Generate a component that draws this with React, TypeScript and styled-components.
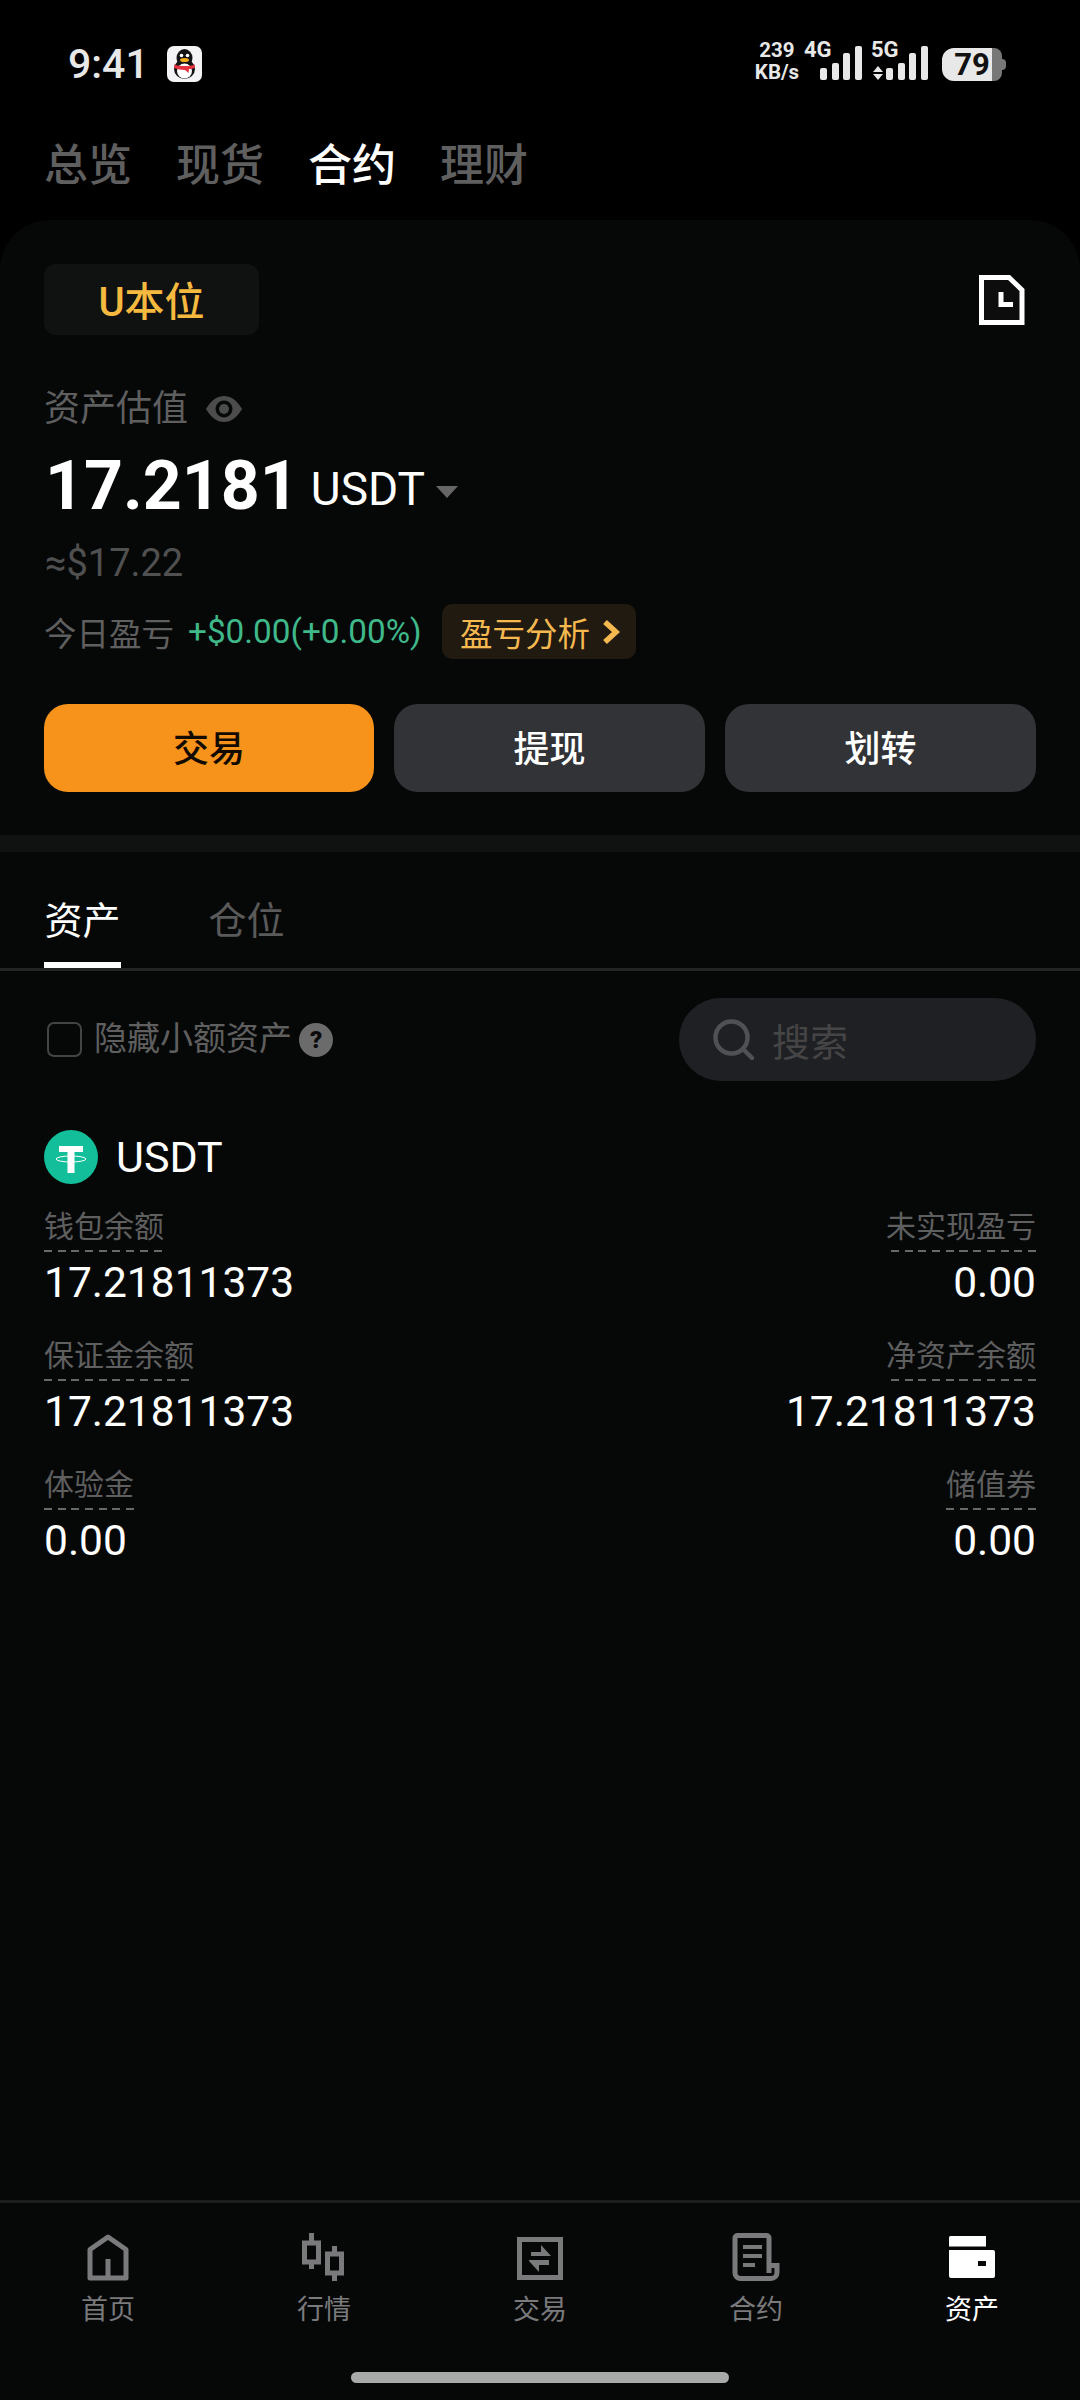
import styled, { createGlobalStyle } from "styled-components";

const GlobalStyle = createGlobalStyle`
  html, body {
    margin: 0;
    padding: 0;
    background: #000;
  }
  * {
    box-sizing: border-box;
  }
`;

const FONT = `Roboto, "Noto Sans CJK SC", sans-serif`;

const Page = styled.div`
  width: 1080px;
  height: 2400px;
  background: #000;
  display: flex;
  flex-direction: column;
  overflow: hidden;
  font-family: ${FONT};
`;

const StatusBar = styled.div`
  height: 128px;
  flex: none;
  display: flex;
  align-items: center;
  padding: 0 74px 0 68px;
  color: #e8e8e8;
`;

const Clock = styled.span`
  font-size: 41px;
  font-weight: 500;
  width: 99px;
`;

const StatusRight = styled.div`
  margin-left: auto;
  display: flex;
  align-items: center;
  height: 40px;
`;

const Speed = styled.div`
  width: 46px;
  margin-bottom: 6px;
  font-size: 20.5px;
  line-height: 22px;
  font-weight: 700;
  text-align: center;
  white-space: nowrap;
`;

const SignalCell = styled.div<{ $width: number; $end?: number }>`
  position: relative;
  width: ${(p) => p.$width}px;
  height: 40px;
  margin-right: ${(p) => p.$end ?? 0}px;
`;

const SignalLabel = styled.span<{ $left: number }>`
  position: absolute;
  left: ${(p) => p.$left}px;
  top: -5px;
  font-size: 22px;
  line-height: 22px;
  font-weight: 700;
`;

const BarsSvg = styled.svg`
  position: absolute;
  right: 0;
  bottom: 4px;
`;

const ArrowsSvg = styled.svg`
  position: absolute;
  left: 11px;
  bottom: 4px;
`;

const Battery = styled.div`
  position: relative;
  width: 60px;
  height: 33px;
  margin-right: 4px;
  border-radius: 12px 8px 8px 12px;
  background: linear-gradient(90deg, #e8e8e8 50px, #777 50px);
  color: #111;
  font-size: 31px;
  line-height: 33px;
  font-weight: 700;
  text-align: center;

  &::after {
    content: "";
    position: absolute;
    left: 100%;
    top: 11px;
    width: 4px;
    height: 11px;
    border-radius: 0 4px 4px 0;
    background: #777;
  }
`;

const TopTabs = styled.div`
  height: 92px;
  flex: none;
  display: flex;
  gap: 44px;
  padding: 14px 0 0 44px;
`;

const TopTab = styled.span<{ $active?: boolean }>`
  font-size: 44px;
  line-height: 48px;
  font-weight: 500;
  color: ${(p) => (p.$active ? "#fff" : "#5f5f5f")};
`;

const Card = styled.div`
  flex: 1;
  min-height: 0;
  background: #060808;
  border-radius: 50px 50px 0 0;
  display: flex;
  flex-direction: column;
`;

const Hero = styled.section`
  padding: 44px 44px 43px;
`;

const HeroTop = styled.div`
  display: flex;
  align-items: center;
  justify-content: space-between;
  height: 71px;
  padding-right: 11px;
`;

const MarginPill = styled.div`
  width: 215px;
  height: 71px;
  border-radius: 12px;
  background: #101111;
  color: #f6b93f;
  font-size: 40px;
  font-weight: 500;
  padding-bottom: 2px;
  display: flex;
  align-items: center;
  justify-content: center;
`;

const EstimateRow = styled.div`
  display: flex;
  align-items: center;
  gap: 18px;
  margin-top: 52px;
  font-size: 36px;
  line-height: 44px;
  color: #5f5f5f;
`;

const BalanceRow = styled.div`
  display: flex;
  align-items: center;
  margin-top: 13px;
  padding-left: 1px;
  color: #fff;
`;

const BalanceValue = styled.span`
  font-size: 68px;
  line-height: 84px;
  font-weight: 700;
`;

const BalanceUnit = styled.span`
  font-size: 46px;
  margin: 6px 0 0 12px;
`;

const Caret = styled.span`
  width: 0;
  height: 0;
  margin: 12px 0 0 11px;
  border-left: 11px solid transparent;
  border-right: 11px solid transparent;
  border-top: 12px solid #666;
`;

const FiatValue = styled.div`
  font-size: 38px;
  line-height: 48px;
  color: #505050;
  margin-top: 11px;
  padding-left: 1px;
`;

const PnlRow = styled.div`
  display: flex;
  align-items: center;
  margin-top: 17px;
  height: 55px;
`;

const PnlLabel = styled.span`
  font-size: 32.5px;
  color: #5f5f5f;
  width: 144px;
`;

const PnlValue = styled.span`
  font-size: 33.3px;
  color: #3fb98a;
  width: 254px;
  white-space: nowrap;
`;

const AnalysisPill = styled.div`
  width: 194px;
  height: 55px;
  border-radius: 10px;
  background: #211a10;
  color: #f6b950;
  font-size: 32.5px;
  display: flex;
  align-items: center;
  padding-left: 18px;
  gap: 12px;
  white-space: nowrap;
`;

const ActionRow = styled.div`
  display: grid;
  grid-template-columns: 330px 311px 311px;
  gap: 20px;
  margin-top: 45px;
`;

const ActionButton = styled.div<{ $primary?: boolean }>`
  height: 88px;
  padding-bottom: 4px;
  border-radius: 24px;
  background: ${(p) => (p.$primary ? "#f7931a" : "#323337")};
  color: ${(p) => (p.$primary ? "#140b00" : "#fff")};
  font-size: 36px;
  font-weight: 500;
  display: flex;
  align-items: center;
  justify-content: center;
`;

const Band = styled.div`
  height: 17px;
  flex: none;
  background: #101111;
`;

const AssetTabs = styled.div`
  display: flex;
  gap: 87px;
  padding: 45px 44px 0;
  border-bottom: 3px solid #222323;
  height: 119px;
`;

const AssetTab = styled.div<{ $active?: boolean }>`
  width: 77px;
  height: 71px;
  font-size: 38px;
  line-height: 48px;
  text-align: center;
  color: ${(p) => (p.$active ? "#fff" : "#5a5a5a")};
  border-bottom: 6px solid ${(p) => (p.$active ? "#fff" : "transparent")};
`;

const FilterRow = styled.div`
  display: flex;
  align-items: center;
  margin-top: 27px;
  padding: 0 44px 0 47px;
  height: 83px;
`;

const Checkbox = styled.span`
  width: 35px;
  height: 35px;
  border: 2px solid #444;
  border-radius: 7px;
`;

const FilterLabel = styled.span`
  font-size: 33px;
  line-height: 44px;
  margin: 0 0 2px 12px;
  color: #5f5f5f;
`;

const HelpBadge = styled.span`
  width: 34px;
  height: 34px;
  border-radius: 50%;
  margin-left: 7px;
  background: #6b6b6b;
  color: #0a0a0a;
  font-size: 24px;
  font-weight: 900;
  display: flex;
  align-items: center;
  justify-content: center;
`;

const SearchBox = styled.div`
  margin-left: auto;
  width: 357px;
  height: 83px;
  border-radius: 42px;
  background: #1f2024;
  display: flex;
  align-items: center;
  padding-left: 34px;
  gap: 18px;
  font-size: 38px;
  color: #454545;
`;

const AssetSection = styled.section`
  padding: 49px 44px 0;
`;

const AssetHead = styled.div`
  display: flex;
  align-items: center;
  gap: 18px;
  height: 54px;
  font-size: 43px;
  color: #fff;
`;

const MetricGrid = styled.div`
  display: grid;
  grid-template-columns: 1fr 1fr;
  row-gap: 26px;
  margin-top: 23px;
`;

const Metric = styled.div<{ $right?: boolean }>`
  display: flex;
  flex-direction: column;
  align-items: ${(p) => (p.$right ? "flex-end" : "flex-start")};
`;

const MetricLabel = styled.span<{ $right?: boolean }>`
  font-size: 30px;
  line-height: 40px;
  color: #5f5f5f;
  padding-bottom: 5px;
  background: repeating-linear-gradient(
      ${(p) => (p.$right ? "270deg" : "90deg")},
      #686868 0 8px,
      transparent 8px 13.7px
    )
    left bottom / 100% 2px no-repeat;
`;

const MetricValue = styled.span`
  font-size: 42.5px;
  line-height: 54px;
  margin-top: 4px;
  color: #fff;
`;

const Nav = styled.nav`
  margin-top: auto;
  height: 200px;
  flex: none;
  border-top: 3px solid #1b1d1d;
  display: flex;
  flex-direction: column;
  align-items: center;
`;

const NavItems = styled.div`
  width: 100%;
  display: grid;
  grid-template-columns: repeat(5, 1fr);
  padding-top: 30px;
`;

const NavItem = styled.div<{ $active?: boolean }>`
  display: flex;
  flex-direction: column;
  align-items: center;
  color: ${(p) => (p.$active ? "#fff" : "#7a7a7c")};
  font-size: 27px;
  line-height: 32px;
  gap: 13px;
`;

const NavIcon = styled.svg`
  width: 48px;
  height: 48px;
  display: block;
`;

const HomeIndicator = styled.div`
  width: 378px;
  height: 11px;
  border-radius: 6px;
  background: #a8a9a9;
  margin-top: 46px;
`;

const Bars = () => (
  <BarsSvg width="42" height="34" viewBox="0 0 42 34" fill="#e8e8e8">
    <rect x="0" y="22" width="7" height="12" rx="2" />
    <rect x="12" y="17" width="7" height="17" rx="2" />
    <rect x="23" y="7" width="7" height="27" rx="2" />
    <rect x="35" y="0" width="7" height="34" rx="2" />
  </BarsSvg>
);

const DataArrows = () => (
  <ArrowsSvg width="10" height="14" viewBox="0 0 10 14" fill="#e8e8e8">
    <path d="M5 0L10 6H0Z" />
    <path d="M0 8H10L5 14Z" />
  </ArrowsSvg>
);

const QQIcon = () => (
  <svg width="35" height="36" viewBox="0 0 35 36">
    <rect width="35" height="36" rx="7" fill="#f4f4f6" />
    <ellipse cx="17.5" cy="12" rx="8" ry="9" fill="#141414" />
    <ellipse cx="17.5" cy="23" rx="10.5" ry="10" fill="#141414" />
    <ellipse cx="17.5" cy="25" rx="7.5" ry="7.5" fill="#fff" />
    <path d="M7 18.5C13 20.5 22 20.5 28 18.5L27.5 22C25 23 23 23 22 23L21.5 27L18 24C14 24 10 23 7.5 22Z" fill="#e5323f" />
    <ellipse cx="17.5" cy="14" rx="4.5" ry="2" fill="#f3ac1c" />
    <circle cx="14.5" cy="9.5" r="1.8" fill="#fff" />
    <circle cx="20.5" cy="9.5" r="1.8" fill="#fff" />
  </svg>
);

const HistoryIcon = () => (
  <svg width="46" height="50" viewBox="0 0 46 50">
    <path d="M2.5 2.5H30L43 15V47.5H2.5Z" fill="#0d0d0d" stroke="#fff" strokeWidth="5" />
    <path d="M22 17V29.5H34" fill="none" stroke="#fff" strokeWidth="5" />
  </svg>
);

const EyeIcon = () => (
  <svg width="36" height="26" viewBox="0 0 36 26">
    <path d="M0 13C6 3 12 0 18 0C24 0 30 3 36 13C30 23 24 26 18 26C12 26 6 23 0 13Z" fill="#4c4c4c" />
    <circle cx="18" cy="13" r="8.5" fill="#060808" />
    <circle cx="18" cy="13" r="5" fill="#4c4c4c" />
  </svg>
);

const Chevron = () => (
  <svg width="18" height="26" viewBox="0 0 18 26">
    <path d="M3 3L14 13L3 23" fill="none" stroke="#f6b950" strokeWidth="5.5" />
  </svg>
);

const SearchIcon = () => (
  <svg width="41" height="41" viewBox="0 0 41 41">
    <circle cx="18.5" cy="18.5" r="16" fill="none" stroke="#505154" strokeWidth="4.5" />
    <path d="M30 30L39 39" stroke="#505154" strokeWidth="4.5" strokeLinecap="round" />
  </svg>
);

const TetherIcon = () => (
  <svg width="54" height="54" viewBox="0 0 54 54">
    <circle cx="27" cy="27" r="27" fill="#13bf9b" />
    <rect x="15" y="16" width="24" height="6" fill="#fff" />
    <rect x="23.5" y="16" width="7" height="27" fill="#fff" />
    <ellipse cx="27" cy="29" rx="15" ry="3" fill="none" stroke="#fff" strokeWidth="1" />
  </svg>
);

const navStroke = { fill: "none", stroke: "currentColor", strokeWidth: 5 };

const HomeGlyph = () => (
  <NavIcon viewBox="0 0 48 48">
    <path d="M6 45V16.5L24 4L42 16.5V45Z" {...navStroke} strokeLinejoin="round" />
    <path d="M24 26V44" {...navStroke} />
  </NavIcon>
);

const MarketGlyph = () => (
  <NavIcon viewBox="0 0 48 48">
    <rect x="4.5" y="10" width="14" height="19" {...navStroke} />
    <rect x="27.5" y="21" width="14" height="19" {...navStroke} />
    <path d="M11.5 0V10M11.5 29V36M34.5 13V21M34.5 40V48" {...navStroke} />
  </NavIcon>
);

const TradeGlyph = () => (
  <NavIcon viewBox="0 0 48 48">
    <rect x="3.5" y="6.5" width="41" height="38" {...navStroke} />
    <path d="M15 19H25V12L35 23H15Z" fill="currentColor" />
    <path d="M13 27H33V32H23V39L13 28Z" fill="currentColor" />
  </NavIcon>
);

const ContractGlyph = () => (
  <NavIcon viewBox="0 0 48 48">
    <path d="M37 32V5A2.5 2.5 0 0 0 34.5 2.5H5.5A2.5 2.5 0 0 0 3 5V40A5.5 5.5 0 0 0 8.5 45.500H39A6 6 0 0 0 45 39.500V32.500H37V40" {...navStroke} />
    <path d="M11 12H30V16H11ZM11 21H30V25H11ZM11 30H23V34H11Z" fill="currentColor" />
  </NavIcon>
);

const WalletGlyph = () => (
  <NavIcon viewBox="0 0 48 48">
    <path d="M1 4.500A1.500 1.500 0 0 1 2.500 3H38V13.500H1Z" fill="currentColor" />
    <path d="M1 17H45A2 2 0 0 1 47 19V43A2 2 0 0 1 45 45H3A2 2 0 0 1 1 43Z" fill="currentColor" />
    <rect x="30" y="28" width="8" height="5" fill="#060808" />
  </NavIcon>
);

const metrics = [
  { label: "钱包余额", value: "17.21811373" },
  { label: "未实现盈亏", value: "0.00", right: true },
  { label: "保证金余额", value: "17.21811373" },
  { label: "净资产余额", value: "17.21811373", right: true },
  { label: "体验金", value: "0.00" },
  { label: "储值券", value: "0.00", right: true },
];

const navItems = [
  { label: "首页", icon: <HomeGlyph /> },
  { label: "行情", icon: <MarketGlyph /> },
  { label: "交易", icon: <TradeGlyph /> },
  { label: "合约", icon: <ContractGlyph /> },
  { label: "资产", icon: <WalletGlyph />, active: true },
];

export default function App() {
  return (
    <Page>
      <GlobalStyle />
      <StatusBar>
        <Clock>9:41</Clock>
        <QQIcon />
        <StatusRight>
          <Speed>
            239
            <br />
            KB/s
          </Speed>
          <SignalCell $width={62}>
            <SignalLabel $left={4}>4G</SignalLabel>
            <Bars />
          </SignalCell>
          <SignalCell $width={66} $end={14}>
            <SignalLabel $left={9}>5G</SignalLabel>
            <DataArrows />
            <Bars />
          </SignalCell>
          <Battery>79</Battery>
        </StatusRight>
      </StatusBar>

      <TopTabs>
        <TopTab>总览</TopTab>
        <TopTab>现货</TopTab>
        <TopTab $active>合约</TopTab>
        <TopTab>理财</TopTab>
      </TopTabs>

      <Card>
        <Hero>
          <HeroTop>
            <MarginPill>U本位</MarginPill>
            <HistoryIcon />
          </HeroTop>
          <EstimateRow>
            资产估值
            <EyeIcon />
          </EstimateRow>
          <BalanceRow>
            <BalanceValue>17.2181</BalanceValue>
            <BalanceUnit>USDT</BalanceUnit>
            <Caret />
          </BalanceRow>
          <FiatValue>≈$17.22</FiatValue>
          <PnlRow>
            <PnlLabel>今日盈亏</PnlLabel>
            <PnlValue>+$0.00(+0.00%)</PnlValue>
            <AnalysisPill>
              盈亏分析
              <Chevron />
            </AnalysisPill>
          </PnlRow>
          <ActionRow>
            <ActionButton $primary>交易</ActionButton>
            <ActionButton>提现</ActionButton>
            <ActionButton>划转</ActionButton>
          </ActionRow>
        </Hero>

        <Band />

        <AssetTabs>
          <AssetTab $active>资产</AssetTab>
          <AssetTab>仓位</AssetTab>
        </AssetTabs>

        <FilterRow>
          <Checkbox />
          <FilterLabel>隐藏小额资产</FilterLabel>
          <HelpBadge>?</HelpBadge>
          <SearchBox>
            <SearchIcon />
            搜索
          </SearchBox>
        </FilterRow>

        <AssetSection>
          <AssetHead>
            <TetherIcon />
            USDT
          </AssetHead>
          <MetricGrid>
            {metrics.map((m) => (
              <Metric key={m.label} $right={m.right}>
                <MetricLabel $right={m.right}>{m.label}</MetricLabel>
                <MetricValue>{m.value}</MetricValue>
              </Metric>
            ))}
          </MetricGrid>
        </AssetSection>

        <Nav>
          <NavItems>
            {navItems.map((item) => (
              <NavItem key={item.label} $active={item.active}>
                {item.icon}
                {item.label}
              </NavItem>
            ))}
          </NavItems>
          <HomeIndicator />
        </Nav>
      </Card>
    </Page>
  );
}
